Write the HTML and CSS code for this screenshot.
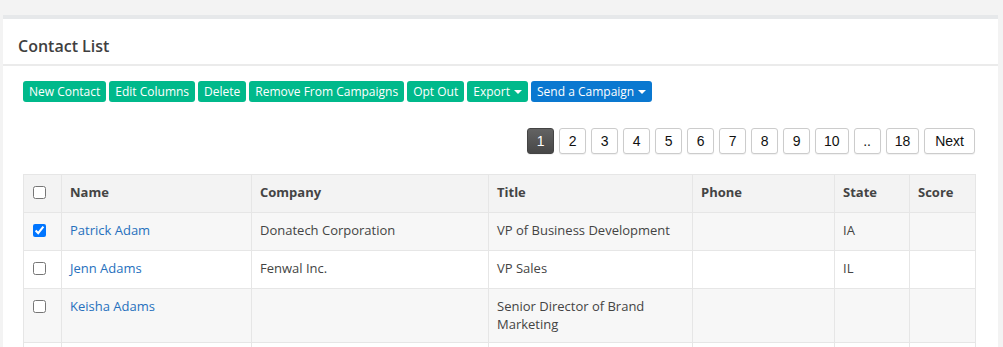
FILE: index.html
```html
<!DOCTYPE html>
<html lang="en">
<head>
<meta charset="UTF-8" />
<title>Contact List</title>
<link rel="stylesheet" href="styles.css">
</head>
<body>

<!-- Contacts panel -->
<div class="panel">
  <div class="panel-head">
    <h2>Contact List</h2>
  </div>
  <div class="panel-body">
    <div class="actions">
      <button class="btn">New Contact</button>
      <button class="btn">Edit Columns</button>
      <button class="btn">Delete</button>
      <button class="btn">Remove From Campaigns</button>
      <button class="btn">Opt Out</button>
      <button class="btn">Export <span class="caret"></span></button>
      <button class="btn btn-blue">Send a Campaign <span class="caret"></span></button>
    </div>

    <div class="pager">
      <a class="page active">1</a>
      <a class="page">2</a>
      <a class="page">3</a>
      <a class="page">4</a>
      <a class="page">5</a>
      <a class="page">6</a>
      <a class="page">7</a>
      <a class="page">8</a>
      <a class="page">9</a>
      <a class="page">10</a>
      <a class="page">..</a>
      <a class="page">18</a>
      <a class="page page-next">Next</a>
    </div>

    <table class="contacts">
      <colgroup>
        <col class="c-check">
        <col class="c-name">
        <col class="c-company">
        <col class="c-title">
        <col class="c-phone">
        <col class="c-state">
        <col class="c-score">
      </colgroup>
      <thead>
        <tr>
          <th><input type="checkbox"></th>
          <th>Name</th>
          <th>Company</th>
          <th>Title</th>
          <th>Phone</th>
          <th>State</th>
          <th>Score</th>
        </tr>
      </thead>
      <tbody>
        <tr>
          <td><input type="checkbox" checked></td>
          <td><a href="#">Patrick Adam</a></td>
          <td>Donatech Corporation</td>
          <td>VP of Business Development</td>
          <td></td>
          <td>IA</td>
          <td></td>
        </tr>
        <tr>
          <td><input type="checkbox"></td>
          <td><a href="#">Jenn Adams</a></td>
          <td>Fenwal Inc.</td>
          <td>VP Sales</td>
          <td></td>
          <td>IL</td>
          <td></td>
        </tr>
        <tr>
          <td><input type="checkbox"></td>
          <td><a href="#">Keisha Adams</a></td>
          <td></td>
          <td>Senior Director of Brand Marketing</td>
          <td></td>
          <td></td>
          <td></td>
        </tr>
        <tr class="empty">
          <td></td>
          <td></td>
          <td></td>
          <td></td>
          <td></td>
          <td></td>
          <td></td>
        </tr>
      </tbody>
    </table>
  </div>
</div>

</body>
</html>
```

FILE: styles.css
```css
* { box-sizing: border-box; }
body {
  margin: 0;
  padding: 15px 5px 0 3px;
  background: #f3f3f3;
  font-family: 'Open Sans', sans-serif;
  color: #444;
  height: 347px;
  overflow: hidden;
}

/* Panel */
.panel {
  background: #fff;
  border-top: 4px solid #e6e8ea;
}
.panel-head {
  height: 47px;
  padding: 0 15px;
  display: flex;
  align-items: center;
  border-bottom: 2px solid #ebebeb;
}
.panel-head h2 {
  margin: 0;
  padding-top: 8px;
  font-size: 16px;
  font-weight: 600;
  color: #3f3f3f;
}
.panel-body {
  padding: 15px 23px 0 20px;
}

/* Action buttons */
.actions {
  display: flex;
  gap: 3px;
}
.btn {
  font-family: 'Open Sans', sans-serif;
  font-size: 12px;
  line-height: 15px;
  height: 21px;
  padding: 2px 6px 3px;
  border: none;
  border-radius: 3px;
  background: #00b98b;
  color: #fff;
  cursor: pointer;
  white-space: nowrap;
}
.btn-blue {
  background: #0a78d0;
}
.caret {
  display: inline-block;
  width: 0;
  height: 0;
  margin-left: 1px;
  vertical-align: middle;
  border-top: 4px solid #fff;
  border-left: 4px solid transparent;
  border-right: 4px solid transparent;
}

/* Pager */
.pager {
  display: flex;
  justify-content: flex-end;
  gap: 5px;
  margin-top: 26px;
}
.page {
  font-family: 'Liberation Sans', Arial, sans-serif;
  font-size: 14px;
  color: #111;
  height: 26px;
  min-width: 27px;
  padding: 0 8px;
  display: flex;
  align-items: center;
  justify-content: center;
  border: 1px solid #ccc;
  border-radius: 3px;
  background: #fff;
  box-shadow: 0 1px 1px rgba(0,0,0,0.06);
}
.page-next {
  padding: 0 10px;
}
.page.active {
  background: linear-gradient(#636363, #474747);
  border-color: #444;
  color: #fff;
}

/* Table */
.contacts {
  margin-top: 20px;
  width: 952px;
  border-collapse: collapse;
  table-layout: fixed;
  font-size: 13px;
}
.c-check { width: 38px; }
.c-name { width: 190px; }
.c-company { width: 237px; }
.c-title { width: 204px; }
.c-phone { width: 142px; }
.c-state { width: 75px; }
.c-score { width: 66px; }
.contacts th,
.contacts td {
  border: 1px solid #e6e6e6;
  padding: 8px 8px 9px;
  text-align: left;
  vertical-align: top;
  line-height: 18px;
  height: 38px;
}
.contacts th {
  background: #f3f3f3;
  font-weight: 700;
}
.contacts tbody tr:nth-child(odd) td {
  background: #f7f7f7;
}
.contacts input {
  display: block;
  margin: 3px 0 0 1px;
  width: 13px;
  height: 13px;
}
.contacts a {
  color: #2670bd;
  text-decoration: none;
}
```
